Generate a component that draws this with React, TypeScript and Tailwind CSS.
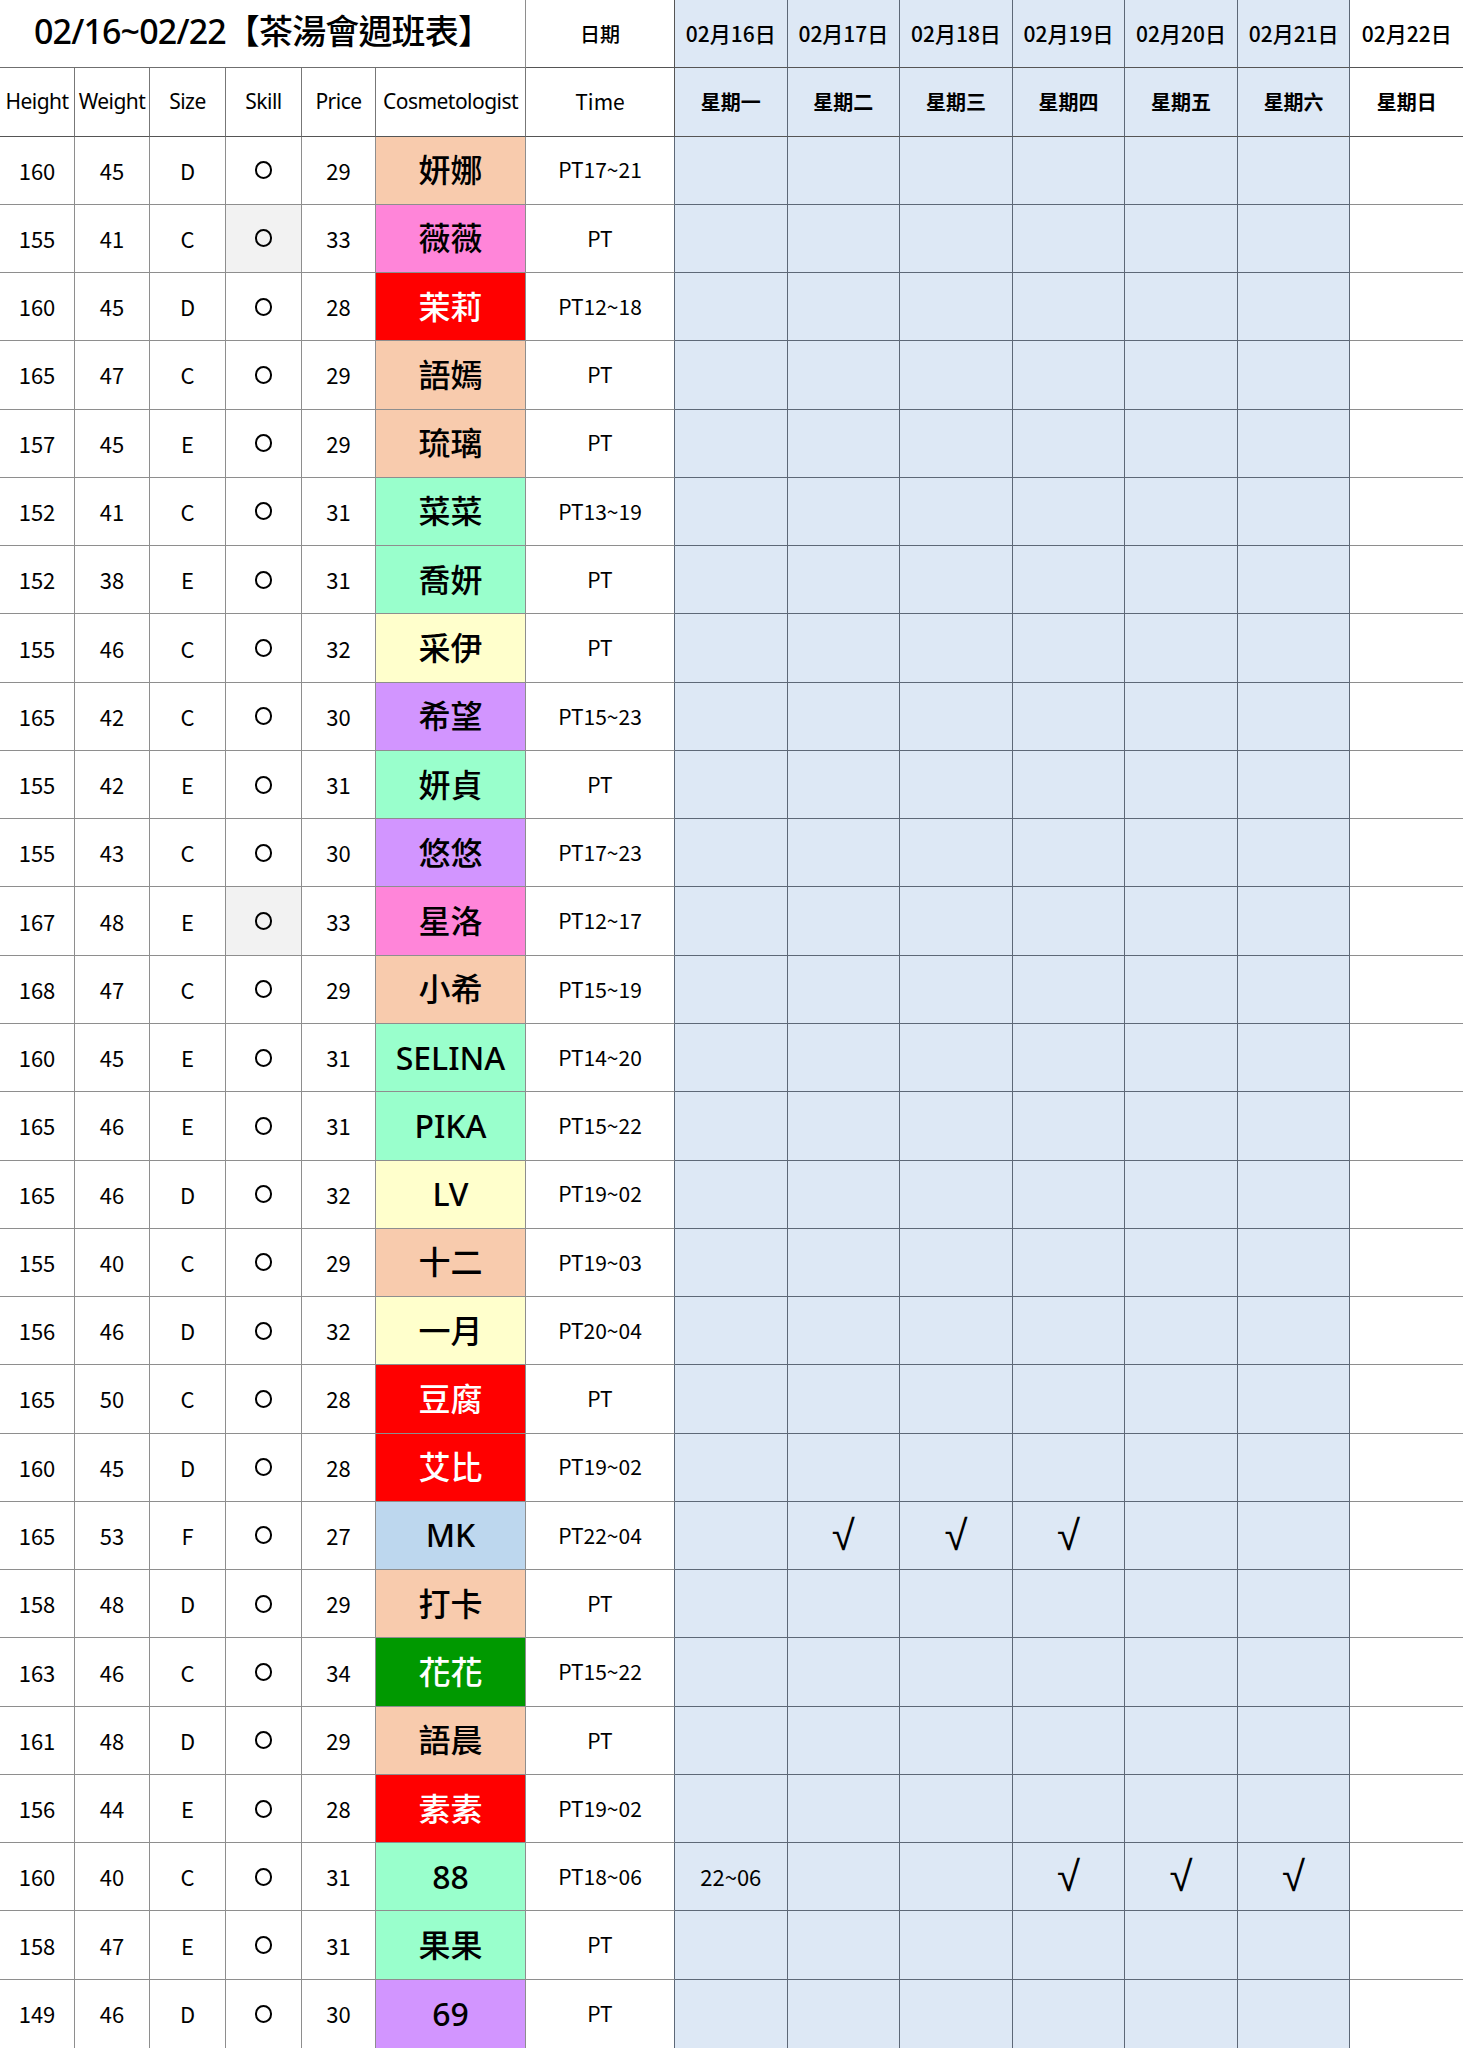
import React from 'react';

type Row = [number, number, string, number, string, string, string, string?];

// [height, weight, size, price, name, bg, time, text colour]
const rows: Row[] = [
  [160, 45, 'D', 29, '妍娜', 'bg-[#f8cbad]', 'PT17~21'],
  [155, 41, 'C', 33, '薇薇', 'bg-[#ff85d9]', 'PT'],
  [160, 45, 'D', 28, '茉莉', 'bg-[#ff0000]', 'PT12~18', 'text-white'],
  [165, 47, 'C', 29, '語嫣', 'bg-[#f8cbad]', 'PT'],
  [157, 45, 'E', 29, '琉璃', 'bg-[#f8cbad]', 'PT'],
  [152, 41, 'C', 31, '菜菜', 'bg-[#99ffcc]', 'PT13~19'],
  [152, 38, 'E', 31, '喬妍', 'bg-[#99ffcc]', 'PT'],
  [155, 46, 'C', 32, '采伊', 'bg-[#ffffcc]', 'PT'],
  [165, 42, 'C', 30, '希望', 'bg-[#d295ff]', 'PT15~23'],
  [155, 42, 'E', 31, '妍貞', 'bg-[#99ffcc]', 'PT'],
  [155, 43, 'C', 30, '悠悠', 'bg-[#d295ff]', 'PT17~23'],
  [167, 48, 'E', 33, '星洛', 'bg-[#ff85d9]', 'PT12~17'],
  [168, 47, 'C', 29, '小希', 'bg-[#f8cbad]', 'PT15~19'],
  [160, 45, 'E', 31, 'SELINA', 'bg-[#99ffcc]', 'PT14~20'],
  [165, 46, 'E', 31, 'PIKA', 'bg-[#99ffcc]', 'PT15~22'],
  [165, 46, 'D', 32, 'LV', 'bg-[#ffffcc]', 'PT19~02'],
  [155, 40, 'C', 29, '十二', 'bg-[#f8cbad]', 'PT19~03'],
  [156, 46, 'D', 32, '一月', 'bg-[#ffffcc]', 'PT20~04'],
  [165, 50, 'C', 28, '豆腐', 'bg-[#ff0000]', 'PT', 'text-white'],
  [160, 45, 'D', 28, '艾比', 'bg-[#ff0000]', 'PT19~02', 'text-white'],
  [165, 53, 'F', 27, 'MK', 'bg-[#bdd7ee]', 'PT22~04'],
  [158, 48, 'D', 29, '打卡', 'bg-[#f8cbad]', 'PT'],
  [163, 46, 'C', 34, '花花', 'bg-[#009900]', 'PT15~22', 'text-white'],
  [161, 48, 'D', 29, '語晨', 'bg-[#f8cbad]', 'PT'],
  [156, 44, 'E', 28, '素素', 'bg-[#ff0000]', 'PT19~02', 'text-white'],
  [160, 40, 'C', 31, '88', 'bg-[#99ffcc]', 'PT18~06'],
  [158, 47, 'E', 31, '果果', 'bg-[#99ffcc]', 'PT'],
  [149, 46, 'D', 30, '69', 'bg-[#d295ff]', 'PT'],
];

// schedule marks per row index: 7 day cells
const marks: Record<number, string[]> = {
  20: ['', '√', '√', '√', '', '', ''],
  25: ['22~06', '', '', '√', '√', '√', ''],
};

const greySkill = new Set([1, 11]);

const dates = ['02月16日', '02月17日', '02月18日', '02月19日', '02月20日', '02月21日', '02月22日'];
const weekdays = ['星期一', '星期二', '星期三', '星期四', '星期五', '星期六', '星期日'];

const cjk = "font-['Noto_Sans_CJK_TC',sans-serif]";
const cell = 'flex items-center justify-center border-r border-b border-[#8e8e8e] min-w-0 whitespace-nowrap';
const dayCell = 'flex items-center justify-center border-r border-b border-[#5d6877] min-w-0 whitespace-nowrap';

export default function App() {
  return (
    <div className="w-[1463px] h-[2048px] bg-white text-black font-['Noto_Sans','Noto_Sans_CJK_TC',sans-serif] grid grid-cols-[75px_75px_76px_76px_74px_150px_149px_repeat(7,minmax(0,1fr))] grid-rows-[repeat(30,minmax(0,1fr))]">
      {/* title row */}
      <div className={`${cell} col-span-6 text-[34px] font-medium tracking-tight border-b-[#6f6f6f]`}>
        <span className="pb-1">02/16~02/22【茶湯會週班表】</span>
      </div>
      <div className={`${cell} ${cjk} text-[20px] font-medium border-b-[#555] border-r-[#555]`}>日期</div>
      {dates.map((d, i) => (
        <div
          key={d}
          className={`${dayCell} ${cjk} text-[21px] font-medium border-b-[#555] ${i < 6 ? 'bg-[#dde8f5]' : 'bg-white border-r-0'}`}
        >
          {d}
        </div>
      ))}

      {/* column header row */}
      {['Height', 'Weight', 'Size', 'Skill', 'Price', 'Cosmetologist'].map((h) => (
        <div key={h} className={`${cell} text-[21px] tracking-tight border-b-[#555] border-r-[#777]`}>
          {h}
        </div>
      ))}
      <div className={`${cell} ${cjk} text-[21px] border-b-[#555] border-r-[#555]`}>Time</div>
      {weekdays.map((w, i) => (
        <div
          key={w}
          className={`${dayCell} ${cjk} text-[20px] font-bold border-b-[#555] ${i < 6 ? 'bg-[#dde8f5]' : 'bg-white border-r-0'}`}
        >
          {w}
        </div>
      ))}

      {/* data rows */}
      {rows.map((r, idx) => {
        const [h, w, size, price, name, bg, time, color] = r;
        const m = marks[idx] ?? ['', '', '', '', '', '', ''];
        const last = idx === rows.length - 1;
        const bottom = last ? 'border-b-0' : '';
        return (
          <React.Fragment key={idx}>
            {[h, w, size].map((v, j) => (
              <div key={j} className={`${cell} ${cjk} text-[22px] ${bottom}`}>
                {v}
              </div>
            ))}
            <div className={`${cell} ${greySkill.has(idx) ? 'bg-[#f2f2f2]' : ''} ${bottom}`}>
              <span className="block w-[17px] h-[18px] rounded-full border-2 border-black" />
            </div>
            <div className={`${cell} ${cjk} text-[22px] ${bottom}`}>{price}</div>
            <div className={`${cell} ${bg} ${color ?? 'text-black'} text-[32px] font-medium ${bottom}`}>{name}</div>
            <div className={`${cell} ${cjk} text-[21px] border-r-[#5d6877] ${bottom}`}>{time}</div>
            {m.map((v, k) => (
              <div
                key={k}
                className={`${dayCell} ${k < 6 ? 'bg-[#dde8f5]' : 'bg-white border-r-0 border-b-[#8e8e8e]'} ${
                  v === '√'
                    ? "font-['Liberation_Sans',sans-serif] text-[42px]"
                    : `${cjk} text-[22px]`
                } ${bottom}`}
              >
                {v}
              </div>
            ))}
          </React.Fragment>
        );
      })}
    </div>
  );
}
